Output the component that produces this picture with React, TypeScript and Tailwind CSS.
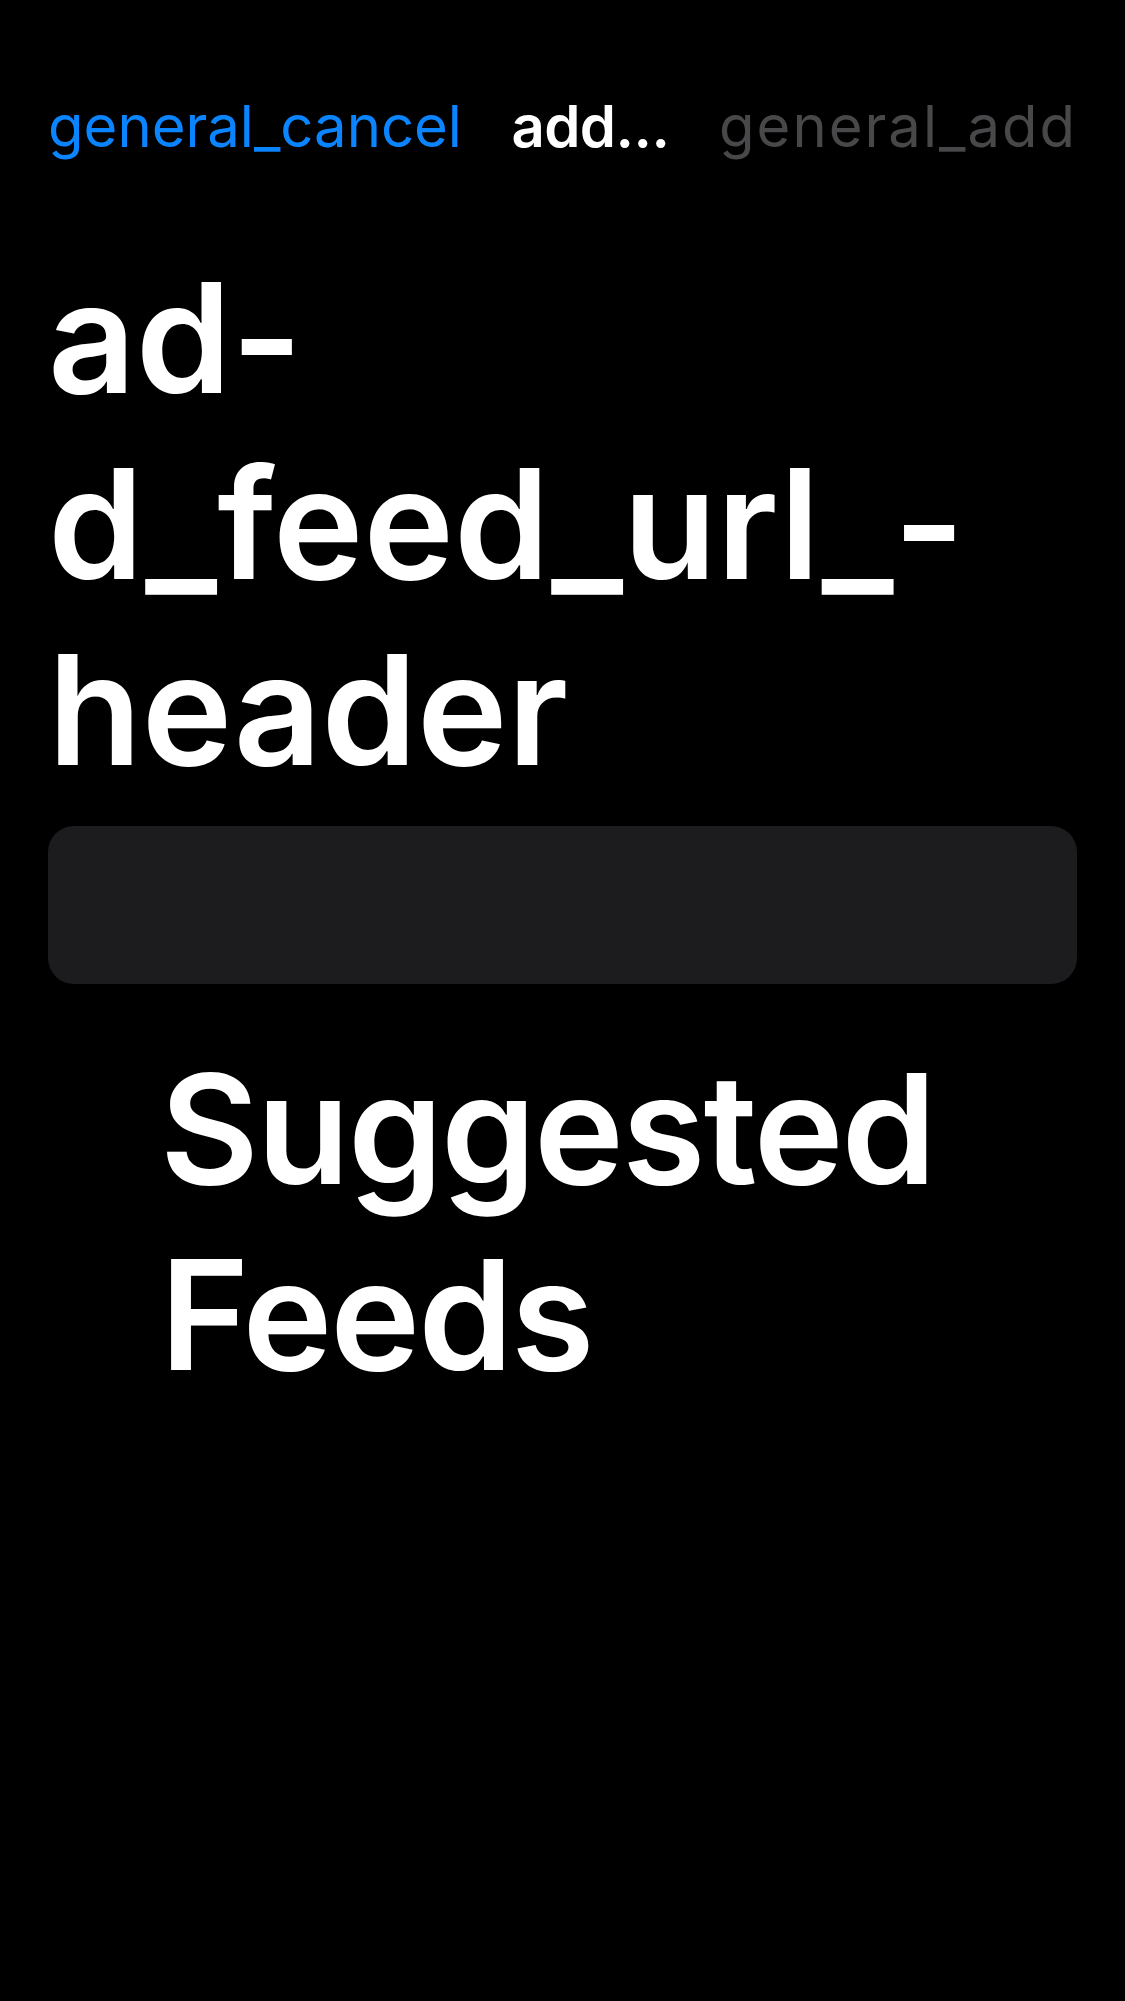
export default function App() {
  return (
    <div className="min-h-[2001px] w-full bg-black px-[48px] font-['Inter','Liberation_Sans',sans-serif] text-white">
      {/* Nav bar */}
      <div className="flex items-baseline justify-between pt-[91px] text-[58px] leading-[70px]">
        <span className="text-[#0a84ff]">general_cancel</span>
        <span className="font-semibold tracking-[-0.5px] text-white">add...</span>
        <span className="tracking-[2px] text-[#48484a]">general_add</span>
      </div>

      {/* Header */}
      <div className="mt-[84px] text-[153px] font-semibold leading-[186px]">
        <div>ad-</div>
        <div>d_feed_url_-</div>
        <div>header</div>
      </div>

      {/* Url field */}
      <div className="mt-[23px] h-[158px] w-full rounded-[26px] bg-[#1c1c1e]" />

      {/* Suggestions */}
      <div className="mt-[52px] pl-[112px] text-[152px] font-semibold leading-[186px] tracking-[-2px]">
        <div>Suggested</div>
        <div>Feeds</div>
      </div>
    </div>
  );
}
